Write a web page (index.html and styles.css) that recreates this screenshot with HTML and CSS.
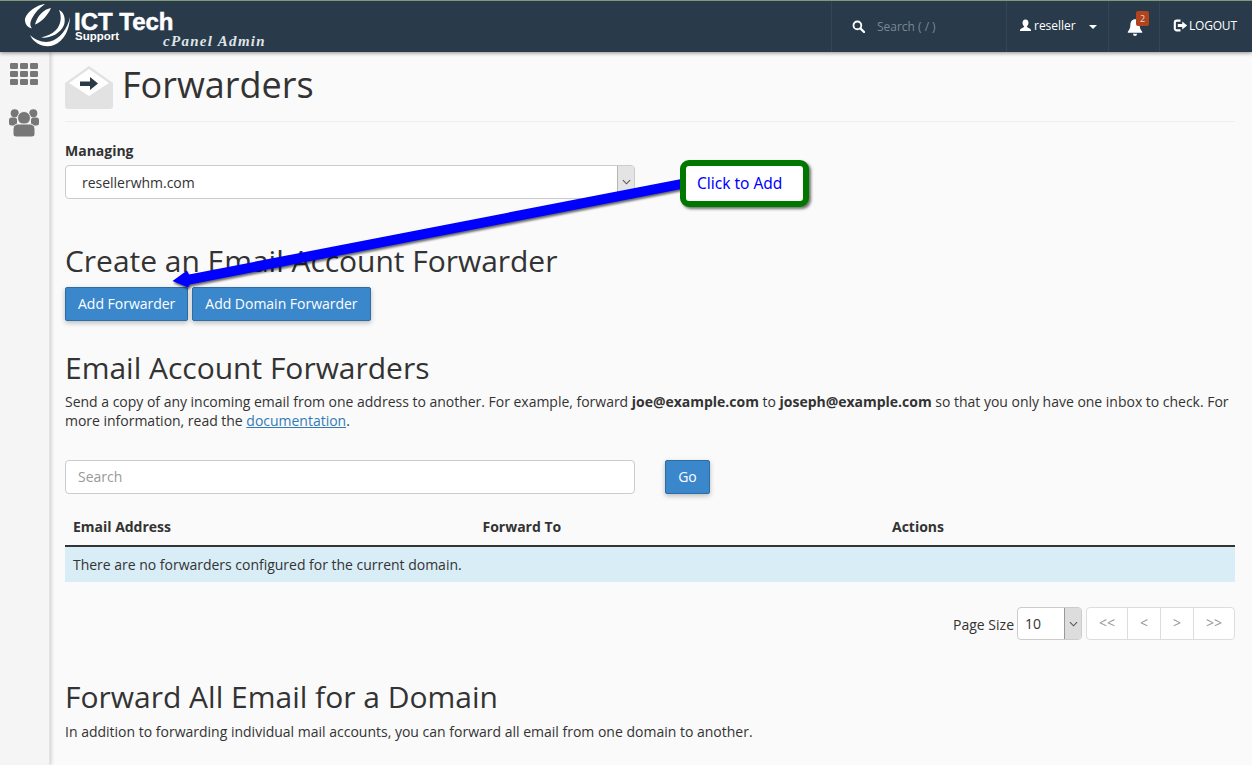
FILE: index.html
```html
<!DOCTYPE html>
<html lang="en">
<head>
<meta charset="utf-8">
<title>Forwarders</title>
<link rel="stylesheet" href="styles.css">
</head>
<body>
<header class="topbar">
  <a class="brand">
    <svg class="brand-mark" viewBox="0 0 50 50" width="50" height="50"><g fill="#fff"><path d="M22 2C13 3 1 12 2 19C2.500 23 5 25.500 9 26.500C6.500 23 7 20 9.500 15.500C12 11 16 6 22 2Z"/><path d="M28 6C21 7 14 14 12 22.500C18 20.500 25 13 28 6Z"/><path d="M36 8C39 14 38 23 33 28C29 32 24 34 18 35.500C27 36.500 37 32 41 23C43 17 41 10 36 8Z"/><path d="M7 33C11 42 22 46.500 31 43C41 39 46.500 28 47 15C44.500 27 37 37 27 39.500C20 41 12 38 7 33Z"/></g></svg>
    <span class="brand-text">
      <span class="brand-name">ICT Tech</span>
      <span class="brand-sub">Support</span>
    </span>
    <span class="brand-admin">cPanel Admin</span>
  </a>
  <div class="top-right">
    <div class="top-cell search-cell">
      <svg class="ico" viewBox="0 0 14 14" width="13" height="13"><circle cx="5.800" cy="5.800" r="4.200" fill="none" stroke="#fff" stroke-width="2"/><path d="M9 9l4 4" stroke="#fff" stroke-width="2.400" stroke-linecap="round"/></svg>
      <span class="search-text">Search ( / )</span>
    </div>
    <div class="top-cell user-cell">
      <svg viewBox="0 0 14 14" width="13" height="13"><path d="M7 0.500C9.200 0.500 10.300 2.200 10.200 4.300C10.100 6 9.300 7.200 8.600 7.900C8.500 8.700 9 9.100 10.300 9.600C12 10.200 13 10.800 13 12.800H1C1 10.800 2 10.200 3.700 9.600C5 9.100 5.500 8.700 5.400 7.900C4.700 7.200 3.900 6 3.800 4.300C3.700 2.200 4.800 0.500 7 0.500Z" fill="#fff"/></svg>
      <span class="user-name">reseller</span>
      <span class="caret"></span>
    </div>
    <div class="top-cell bell-cell">
      <span class="bell-wrap">
        <svg viewBox="0 0 16 16" width="16" height="18" preserveAspectRatio="none"><path d="M8 1C10.800 1 12.500 3 12.600 5.800C12.700 9 13.600 10.600 15.200 12.200V13H0.800V12.200C2.400 10.600 3.300 9 3.400 5.800C3.500 3 5.200 1 8 1Z" fill="#fff"/><path d="M6 14H10C10 15.200 9.100 16 8 16S6 15.200 6 14Z" fill="#fff"/></svg>
        <span class="badge">2</span>
      </span>
    </div>
    <div class="top-cell logout-cell">
      <svg viewBox="0 0 14 14" width="15" height="15"><path d="M7 2.500H3.500A1.800 1.800 0 0 0 1.700 4.300V9.700A1.800 1.800 0 0 0 3.500 11.500H7" fill="none" stroke="#fff" stroke-width="2"/><path d="M4.500 5.600H8.600V3.200L13.200 7L8.600 10.800V8.400H4.500Z" fill="#fff"/></svg>
      <span>LOGOUT</span>
    </div>
  </div>
</header>

<div class="shell">
  <nav class="side">
    <svg viewBox="0 0 28 22" width="28" height="22"><g fill="#777"><rect x="0" y="0" width="8" height="6" rx="1.200"/><rect x="10" y="0" width="8" height="6" rx="1.200"/><rect x="20" y="0" width="8" height="6" rx="1.200"/><rect x="0" y="8" width="8" height="6" rx="1.200"/><rect x="10" y="8" width="8" height="6" rx="1.200"/><rect x="20" y="8" width="8" height="6" rx="1.200"/><rect x="0" y="16" width="8" height="6" rx="1.200"/><rect x="10" y="16" width="8" height="6" rx="1.200"/><rect x="20" y="16" width="8" height="6" rx="1.200"/></g></svg>
    <svg viewBox="0 0 30 28" width="30" height="28"><g fill="#777"><circle cx="5.700" cy="4.200" r="4"/><circle cx="24.300" cy="4.200" r="4"/><rect x="0" y="8.500" width="8" height="8" rx="2.500"/><rect x="22" y="8.500" width="8" height="8" rx="2.500"/><circle cx="15" cy="9" r="6.500" stroke="#f5f5f5" stroke-width="1"/><path d="M4 20C4 16.800 6.500 15 9 15H21C23.500 15 26 16.800 26 20V25C26 27 24.500 28 22.500 28H7.500C5.500 28 4 27 4 25Z" stroke="#f5f5f5" stroke-width="1"/></g></svg>
  </nav>

  <main class="content">
    <div class="page-head">
      <svg class="page-icon" viewBox="0 0 48 43" width="48" height="43">
        <path d="M0 17L24 0L48 17V40C48 41.700 46.700 43 45 43H3C1.300 43 0 41.700 0 40Z" fill="#e2e2e2"/>
        <path d="M4 17L24 3L44 17L24 30Z" fill="#fff"/>
        <path d="M15 15.500H25V11L33 17.500L25 24V20H15Z" fill="#2c3a47"/>
      </svg>
      <h1>Forwarders</h1>
    </div>

    <div class="manage">
      <label class="field-label">Managing</label>
      <div class="select wide">
        <span class="select-value">resellerwhm.com</span>
        <span class="select-arrow"><svg viewBox="0 0 10 6" width="9" height="6"><path d="M1 1l4 4 4-4" fill="none" stroke="#555" stroke-width="1.200"/></svg></span>
      </div>
    </div>

    <h2 class="create-title">Create an Email Account Forwarder</h2>
    <div class="btn-row">
      <button class="btn">Add Forwarder</button>
      <button class="btn">Add Domain Forwarder</button>
    </div>

    <h2 class="list-title">Email Account Forwarders</h2>
    <p class="desc">Send a copy of any incoming email from one address to another. For example, forward <b>joe@example.com</b> to <b>joseph@example.com</b> so that you only have one inbox to check. For more information, read the <a class="doc-link">documentation</a>.</p>

    <div class="search-row">
      <div class="search-input">Search</div>
      <button class="btn go">Go</button>
    </div>

    <div class="table-head">
      <span>Email Address</span>
      <span>Forward To</span>
      <span>Actions</span>
    </div>
    <div class="table-empty">There are no forwarders configured for the current domain.</div>

    <div class="pager-row">
      <span class="page-size">Page Size</span>
      <div class="select small">
        <span class="select-value">10</span>
        <span class="select-arrow"><svg viewBox="0 0 10 6" width="9" height="6"><path d="M1 1l4 4 4-4" fill="none" stroke="#555" stroke-width="1.200"/></svg></span>
      </div>
      <div class="pager">
        <span>&lt;&lt;</span><span>&lt;</span><span>&gt;</span><span>&gt;&gt;</span>
      </div>
    </div>

    <h2 class="all-title">Forward All Email for a Domain</h2>
    <p class="desc all-desc">In addition to forwarding individual mail accounts, you can forward all email from one domain to another.</p>
  </main>
</div>

<svg class="arrow" viewBox="0 0 1252 765" width="1252" height="765">
  <path d="M684 178.500L189 274.500L187 270.500L172.500 281L188 287.500L190 284.500L684 188.500Z" fill="#0000ff"/>
</svg>
<div class="callout">Click to Add</div>
</body>
</html>
```

FILE: styles.css
```css
* { box-sizing: border-box; }
html, body { margin: 0; height: 100%; }
body {
  width: 1252px;
  height: 765px;
  overflow: hidden;
  position: relative;
  background: #fafafa;
  color: #333;
  font-family: "Open Sans", "Liberation Sans", sans-serif;
  font-size: 14px;
  line-height: 20px;
  letter-spacing: -.015px;
}

/* top bar */
.topbar {
  height: 52px;
  display: flex;
  justify-content: space-between;
  background: #293a4a;
  border-top: 1px solid #7f9a78;
  box-shadow: 0 1px 4px rgba(0,0,0,.45);
  position: relative;
  z-index: 2;
}
.brand {
  display: flex;
  position: relative;
  width: 300px;
  color: #fff;
}
.brand-mark { margin: 1px 0 0 23px; flex: none; }
.brand-text { display: flex; flex-direction: column; margin-left: 1px; }
.brand-name {
  font-family: "Liberation Sans", sans-serif;
  font-weight: 700;
  font-size: 24px;
  line-height: 22px;
  margin-top: 10px;
  white-space: nowrap;
  -webkit-text-stroke: .5px #fff;
}
.brand-sub {
  font-family: "Liberation Sans", sans-serif;
  font-weight: 700;
  font-size: 11.500px;
  line-height: 12px;
  margin: -3px 0 0 1px;
}
.brand-admin {
  position: absolute;
  left: 163px;
  top: 32px;
  font-family: "Liberation Serif", serif;
  font-style: italic;
  font-weight: 700;
  font-size: 15px;
  line-height: 16px;
  letter-spacing: 1.300px;
  white-space: nowrap;
  color: #dfe4e8;
}
.top-right { display: flex; }
.top-cell {
  height: 51px;
  display: flex;
  align-items: center;
  border-left: 1px solid #334556;
  color: #fff;
  font-size: 12px;
}
.search-cell { width: 175px; padding-left: 20px; }
.search-text { margin-left: 12px; color: #7b8894; font-size: 12px; }
.user-cell { width: 102px; padding-left: 12px; padding-bottom: 2px; }
.user-name { margin-left: 2px; }
.caret {
  margin-left: 13px;
  margin-top: 3px;
  border-left: 4px solid transparent;
  border-right: 4px solid transparent;
  border-top: 4px solid #fff;
}
.bell-cell { width: 51px; padding-left: 18px; }
.bell-wrap { position: relative; display: block; height: 18px; }
.bell-wrap svg { display: block; }
.badge {
  position: absolute;
  left: 9px;
  top: -7px;
  width: 13px;
  height: 15px;
  background: #b1441c;
  border-radius: 2px;
  color: #ddd;
  font-size: 9px;
  line-height: 15px;
  text-align: center;
}
.logout-cell { width: 93px; padding-left: 13px; padding-bottom: 2px; }
.logout-cell span { margin-left: 1px; letter-spacing: -.2px; }

/* frame */
.shell { display: flex; height: 713px; }
.side {
  width: 50px;
  flex: none;
  background: #f5f5f5;
  border-right: 1px solid #e4e4e4;
  box-shadow: 1px 0 4px rgba(0,0,0,.2);
  display: flex;
  flex-direction: column;
  align-items: center;
  padding-top: 11px;
  padding-right: 1px;
  gap: 24px;
}
.content { flex: 1; padding: 0 17px 0 15px; min-width: 0; }

.page-head {
  display: flex;
  align-items: flex-start;
  height: 70px;
  padding-top: 14px;
  border-bottom: 1px solid #eee;
}
.page-icon { flex: none; }
h1 {
  margin: -3px 0 0 9px;
  font-size: 36px;
  font-weight: 400;
  line-height: 44px;
  color: #333;
}
h2 {
  margin: 0;
  font-size: 30px;
  font-weight: 400;
  line-height: 36px;
  color: #333;
}

.manage { margin-top: 19px; }
.field-label { display: block; font-weight: 700; line-height: 20px; }
.select {
  display: flex;
  justify-content: space-between;
  background: #fff;
  border: 1px solid #ccc;
  border-radius: 4px;
  overflow: hidden;
}
.select.wide { width: 570px; height: 34px; margin-top: 4px; }
.select.wide .select-value { padding: 7px 16px; }
.select-arrow {
  display: flex;
  align-items: center;
  justify-content: center;
  background: #e4e4e4;
  border-left: 1px solid #b5b5b5;
}
.select.wide .select-arrow { width: 17px; height: 100%; }

.create-title { margin-top: 44px; letter-spacing: -.03px; }
.btn-row { display: flex; gap: 4px; margin-top: 8px; }
.btn {
  height: 34px;
  padding: 0 12px;
  background: #3a87cc;
  border: 1px solid #2e6da4;
  border-radius: 2px;
  color: #fff;
  font: 14px/20px "Open Sans", "Liberation Sans", sans-serif;
  letter-spacing: -.015px;
  box-shadow: 0 2px 5px rgba(0,0,0,.25);
}

.list-title { margin-top: 29px; }
.desc { margin: 0; }
.list-title + .desc { margin-top: 6px; line-height: 19px; }
.doc-link { color: #337ab7; text-decoration: underline; }

.search-row { display: flex; margin-top: 30px; }
.search-input {
  width: 570px;
  height: 34px;
  padding: 6px 12px;
  background: #fff;
  border: 1px solid #ccc;
  border-radius: 4px;
  color: #999;
}
.go { margin-left: 30px; width: 45px; padding: 0; }

.table-head {
  display: grid;
  grid-template-columns: 409.500px 409.500px 1fr;
  height: 37px;
  margin-top: 16px;
  padding: 7px 8px 0;
  font-weight: 700;
  border-bottom: 2px solid #333;
}
.table-empty {
  height: 35px;
  padding: 8px;
  background: #d9edf7;
}

.pager-row {
  display: flex;
  justify-content: flex-end;
  align-items: center;
  margin-top: 25px;
  height: 33px;
}
.page-size { margin-right: 3px; padding-top: 2px; letter-spacing: 0; }
.select.small { width: 65px; height: 33px; }
.select.small .select-value { padding: 6px 7px; }
.select.small .select-arrow { width: 17px; height: 100%; background: #ddd; border-left-color: #999; }
.pager {
  display: flex;
  height: 33px;
  margin-left: 4px;
  background: #fff;
  border: 1px solid #ddd;
  border-radius: 4px;
  color: #999;
  font-size: 14px;
}
.pager span {
  display: flex;
  align-items: center;
  justify-content: center;
  width: 33px;
  border-left: 1px solid #ddd;
  padding-bottom: 2px;
}
.pager span:first-child { border-left: 0; width: 40px; }
.pager span:last-child { width: 41px; }

.all-title { margin-top: 39px; letter-spacing: 0; }
.all-desc { margin-top: 7px; letter-spacing: 0; }

/* annotation */
.arrow {
  position: absolute;
  left: 0;
  top: 0;
  z-index: 3;
  pointer-events: none;
  filter: drop-shadow(1px 2px 1px rgba(0,0,0,.6));
}
.callout {
  position: absolute;
  left: 680px;
  top: 160px;
  width: 129px;
  height: 47px;
  padding: 10px 0 0 11px;
  background: #fff;
  border: 6px solid #007800;
  border-radius: 9px;
  box-shadow: 2px 2px 3px rgba(0,0,0,.55);
  color: #0000ff;
  font-family: "Noto Sans", "Open Sans", sans-serif;
  font-size: 15.500px;
  line-height: 14px;
  z-index: 4;
}
```
